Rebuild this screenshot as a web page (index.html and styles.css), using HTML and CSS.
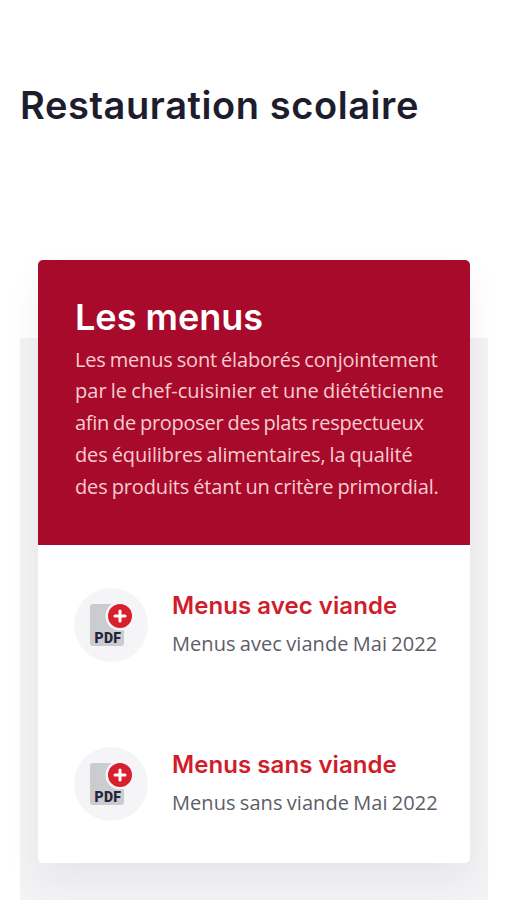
FILE: index.html
```html
<!DOCTYPE html>
<html lang="fr">
<head>
<meta charset="utf-8">
<meta name="viewport" content="width=device-width, initial-scale=1">
<title>Restauration scolaire</title>
<link rel="stylesheet" href="styles.css">
</head>
<body>
<h1 class="title">Restauration scolaire</h1>
<main class="panel">
  <article class="card">
    <header class="intro">
      <h2 class="intro-title">Les menus</h2>
      <p class="intro-text">
        <span class="line l1">Les menus sont élaborés conjointement</span>
        <span class="line l2">par le chef-cuisinier et une diététicienne</span>
        <span class="line l3">afin de proposer des plats respectueux</span>
        <span class="line l4">des équilibres alimentaires, la qualité</span>
        <span class="line l5">des produits étant un critère primordial.</span>
      </p>
    </header>
    <section class="item">
      <div class="badge">
        <svg class="icon" viewBox="0 0 44 44">
          <rect x="1" y="1" width="34" height="42" rx="3" fill="#cbccd0"/>
          <circle cx="31" cy="13" r="14.5" fill="#f5f5f7"/>
          <circle cx="31" cy="13" r="12" fill="#d71f2e"/>
          <path d="M31 8v10M26 13h10" stroke="#fff" stroke-width="3" stroke-linecap="round"/>
          <text class="icon-label" x="5.5" y="39.5" textLength="26.5">PDF</text>
        </svg>
      </div>
      <div class="item-body">
        <h3 class="item-title">Menus avec viande</h3>
        <p class="item-text">Menus avec viande Mai 2022</p>
      </div>
    </section>
    <section class="item">
      <div class="badge">
        <svg class="icon" viewBox="0 0 44 44">
          <rect x="1" y="1" width="34" height="42" rx="3" fill="#cbccd0"/>
          <circle cx="31" cy="13" r="14.5" fill="#f5f5f7"/>
          <circle cx="31" cy="13" r="12" fill="#d71f2e"/>
          <path d="M31 8v10M26 13h10" stroke="#fff" stroke-width="3" stroke-linecap="round"/>
          <text class="icon-label" x="5.5" y="39.5" textLength="26.5">PDF</text>
        </svg>
      </div>
      <div class="item-body">
        <h3 class="item-title">Menus sans viande</h3>
        <p class="item-text">Menus sans viande Mai 2022</p>
      </div>
    </section>
  </article>
</main>
</body>
</html>
```
FILE: styles.css
```css
* { box-sizing: border-box; }
html, body { height: 100%; }
body { margin: 0; padding: 79px 19px 0 20px; background: #fff; font-family: "Open Sans", sans-serif; overflow: hidden; }
h1, h2, h3, p { margin: 0; font-weight: 400; }
h1, h2, h3 { font-family: Inter, sans-serif; font-weight: 600; white-space: nowrap; }
.title { height: 180.5px; font-size: 38px; line-height: 52px; letter-spacing: .58px; color: #1e1d2e; }
.panel { height: 641px; padding: 0 18px; background: linear-gradient(#fff 78px, #f3f3f5 78px); }
.card { height: 603px; border-radius: 5px; background: #fff; box-shadow: 0 16px 36px rgba(30, 30, 50, .06); }
.intro { height: 285.5px; padding: 35.5px 0 0 37px; border-radius: 5px 5px 0 0; background: #a70a2b; color: #fff; }
.intro-title { font-size: 36px; line-height: 44px; }
.intro-text { padding-top: 4.5px; color: #f8ccd0; font-size: 20px; line-height: 31.8px; }
.line { display: block; white-space: nowrap; word-spacing: -1px; }
.l1 { letter-spacing: -.17px; }
.l2 { letter-spacing: .02px; }
.l3 { letter-spacing: -.26px; }
.l4 { letter-spacing: -.13px; }
.l5 { letter-spacing: -.14px; }
.item { display: flex; gap: 24px; height: 158.5px; padding: 43px 0 0 36px; }
.badge { display: flex; flex: none; width: 74px; height: 74px; padding: 15px 0 0 15px; border-radius: 50%; background: #f5f5f7; }
.icon { display: block; width: 44px; height: 44px; }
.icon-label { font: 900 14px Roboto, sans-serif; fill: #25263b; }
.item-title { font-size: 24px; line-height: 35px; letter-spacing: .06px; color: #d01d2b; }
.item-text { padding-top: 4px; font-size: 20px; line-height: 33px; letter-spacing: .06px; word-spacing: -1px; color: #5d5d68; white-space: nowrap; }
```
